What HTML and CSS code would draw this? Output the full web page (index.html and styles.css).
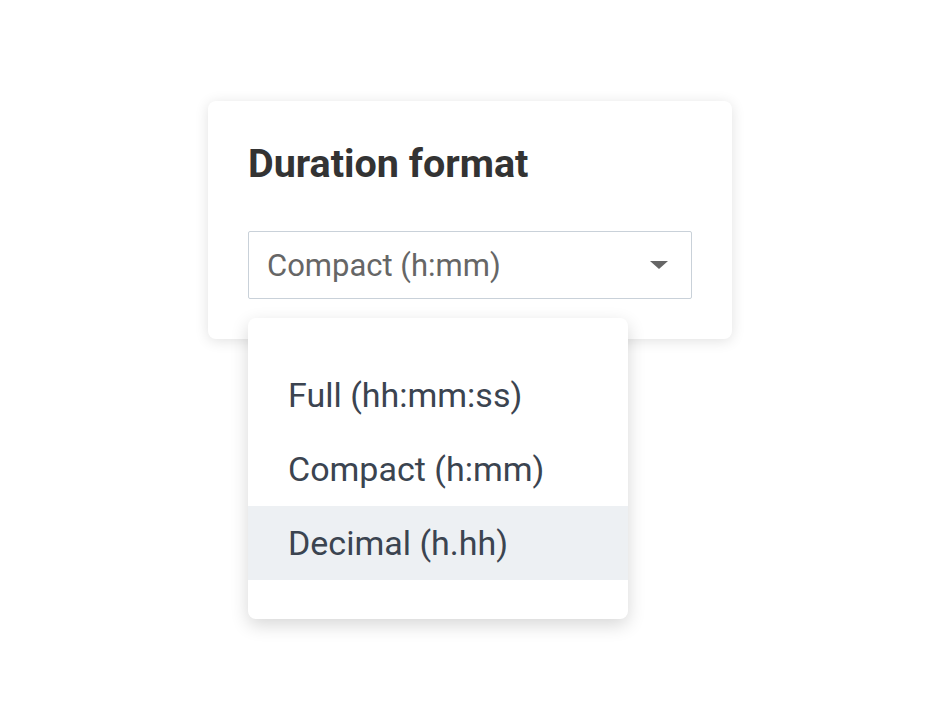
FILE: index.html
```html
<!DOCTYPE html>
<html lang="en">
  <head>
    <meta charset="UTF-8" />
    <meta name="viewport" content="width=device-width, initial-scale=1.0" />
    <title>Duration format</title>
    <link rel="stylesheet" href="styles.css">
  </head>
  <body>
    <div class="page">
      <div class="card">
        <h2 class="card-title">Duration format</h2>

        <div class="select-wrap">
          <div class="select">
            <span class="select-value">Compact (h:mm)</span>
            <span class="select-arrow"></span>
          </div>

          <ul class="menu">
            <li class="menu-item">Full (hh:mm:ss)</li>
            <li class="menu-item">Compact (h:mm)</li>
            <li class="menu-item active">Decimal (h.hh)</li>
          </ul>
        </div>
      </div>
    </div>
  </body>
</html>
```

FILE: styles.css
```css
body {
  margin: 0;
  background: #ffffff;
  font-family: Roboto, "Liberation Sans", sans-serif;
}

.page {
  min-height: 720px;
  box-sizing: border-box;
  padding: 101px 0 0 208px;
}

.card {
  width: 524px;
  box-sizing: border-box;
  padding: 40px;
  background: #ffffff;
  border-radius: 8px;
  box-shadow: 0 2px 14px rgba(0, 0, 0, 0.12);
}

.card-title {
  margin: 0 0 44px;
  font-size: 39.5px;
  line-height: 46px;
  font-weight: 700;
  color: #333333;
}

.select-wrap {
  position: relative;
}

.select {
  display: flex;
  align-items: center;
  justify-content: space-between;
  height: 68px;
  box-sizing: border-box;
  padding: 0 23px 0 18px;
  border: 1px solid #c9d1d9;
  border-radius: 2px;
}

.select-value {
  font-size: 31px;
  color: #666666;
}

.select-arrow {
  width: 0;
  height: 0;
  border-left: 9.5px solid transparent;
  border-right: 9.5px solid transparent;
  border-top: 8px solid #666666;
}

.menu {
  position: absolute;
  top: 87px;
  left: 0;
  width: 380px;
  margin: 0;
  padding: 40px 0 39px;
  list-style: none;
  background: #ffffff;
  border-radius: 8px;
  box-shadow: 0 6px 18px rgba(0, 0, 0, 0.16);
}

.menu-item {
  height: 74px;
  display: flex;
  align-items: center;
  padding-left: 40px;
  font-size: 34px;
  color: #3b4450;
}

.menu-item.active {
  background: #edf0f3;
}
```
